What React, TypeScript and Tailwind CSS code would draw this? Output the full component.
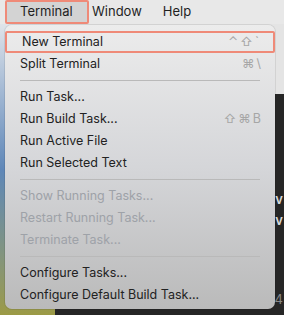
import React from "react";

type Item = { label: string; shortcut?: string; disabled?: boolean; focused?: boolean } | "sep";

const items: Item[] = [
    { label: "New Terminal", shortcut: "⌃⇧`", focused: true },
    { label: "Split Terminal", shortcut: "⌘\\" },
    "sep",
    { label: "Run Task..." },
    { label: "Run Build Task...", shortcut: "⇧⌘B" },
    { label: "Run Active File" },
    { label: "Run Selected Text" },
    "sep",
    { label: "Show Running Tasks...", disabled: true },
    { label: "Restart Running Task...", disabled: true },
    { label: "Terminate Task...", disabled: true },
    "sep",
    { label: "Configure Tasks..." },
    { label: "Configure Default Build Task..." },
];

export default function App() {
    return (
        <div
            className="relative w-[284px] h-[315px] overflow-hidden text-[13px] text-[#1f1f1f]"
            style={{ fontFamily: "Inter, 'Liberation Sans', sans-serif" }}
        >
            {/* Menu bar */}
            <div className="h-[24px] bg-[#e8e8e8] flex items-center">
                <div className="ml-[5px] h-[24px] w-[84px] bg-[#d3d3d3] border-2 border-[#ef8a78] rounded-[2px] flex items-center pl-[13px]">
                    Terminal
                </div>
                <span className="ml-[3px]">Window</span>
                <span className="ml-[21px]">Help</span>
            </div>

            {/* Desktop behind menu */}
            <div className="flex h-[291px]">
                <div className="w-[55px] bg-gradient-to-b from-[#dfe4ea] via-[#5f87b8] to-[#9c9a45]" />
                <div className="flex-1 flex flex-col">
                    <div className="h-[70px] bg-[#e4e4e4]" />
                    <div className="flex-1 bg-[#262626] text-[#d8d8d8] font-semibold text-right pr-[1px] pt-[95px] leading-[21px]">
                        <div>v</div>
                        <div>v</div>
                        <div className="pt-[58px] text-[#888] font-normal">4</div>
                    </div>
                </div>
            </div>

            {/* Dropdown */}
            <div className="absolute left-[5px] top-[25px] w-[270px] h-[284px] rounded-[7px] bg-gradient-to-b from-[#ececec] via-[#d5d6d9] to-[#bababa] shadow-[0_0_0_1px_rgba(0,0,0,0.08)] pt-[6px] text-[12.5px] text-[#222]">
                {items.map((it, i) =>
                    it === "sep" ? (
                        <div key={i} className="mx-[15px] my-[5px] h-px bg-[#b9b9b9]" />
                    ) : (
                        <div
                            key={i}
                            className={
                                "h-[22px] flex items-center justify-between pl-[15px] pr-[12px] " +
                                (it.focused ? "border-2 border-[#ef8a78] rounded-[2px] pl-[13px] pr-[10px]" : "") +
                                (it.disabled ? " text-[#9ea2a8]" : "")
                            }
                        >
                            <span>{it.label}</span>
                            {it.shortcut && (
                                <span className="text-[#a6a6a6] tracking-[2px]">{it.shortcut}</span>
                            )}
                        </div>
                    )
                )}
            </div>
        </div>
    );
}
